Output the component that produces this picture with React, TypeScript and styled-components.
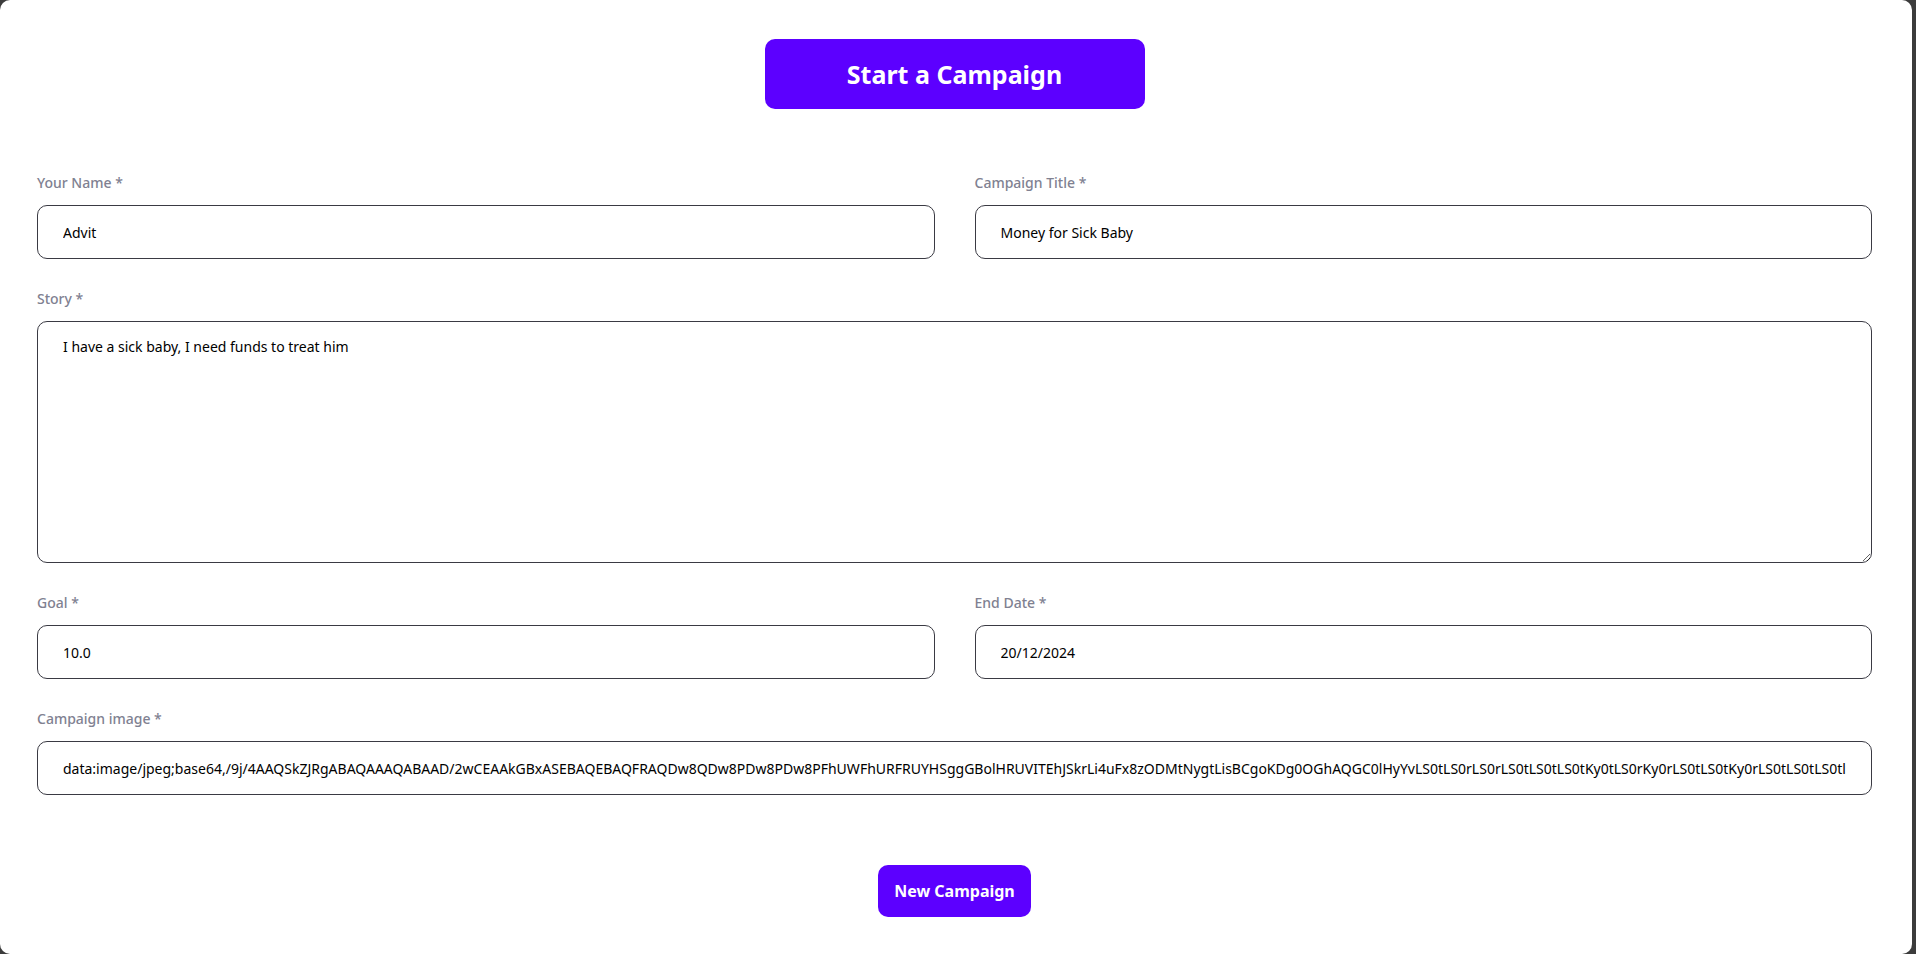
import React, { useState } from "react";
import styled, { createGlobalStyle } from "styled-components";

const GlobalStyle = createGlobalStyle`
    html, body {
        margin: 0;
        padding: 0;
        background: #3c3c3c;
    }
    * {
        box-sizing: border-box;
    }
    body {
        font-family: "Noto Sans", "Open Sans", sans-serif;
    }
`;

const Card = styled.div`
    width: calc(100% - 4px);
    min-height: 100vh;
    background: #ffffff;
    border-radius: 10px;
    padding: 39px 40px 30px 37px;
    display: flex;
    flex-direction: column;
    align-items: center;
`;

const Title = styled.div`
    width: 380px;
    height: 70px;
    border-radius: 10px;
    background: #5c00ff;
    color: #ffffff;
    font-size: 25px;
    font-weight: 700;
    display: flex;
    align-items: center;
    justify-content: center;
`;

const Form = styled.form`
    width: 100%;
    margin-top: 64px;
    display: flex;
    flex-direction: column;
    gap: 30px;
`;

const Row = styled.div`
    display: grid;
    grid-template-columns: 1fr 1fr;
    column-gap: 40px;
`;

const Field = styled.label`
    display: flex;
    flex-direction: column;
`;

const LabelText = styled.span`
    font-size: 14px;
    line-height: 20px;
    font-weight: 500;
    color: #808191;
    margin-bottom: 12px;
`;

const Input = styled.input`
    width: 100%;
    height: 54px;
    padding: 0 25px;
    border: 1px solid #3a3a43;
    border-radius: 10px;
    font-family: "Noto Sans", "Open Sans", sans-serif;
    font-size: 14px;
    color: #000000;
    background: transparent;
    outline: none;
`;

const TextArea = styled.textarea`
    width: 100%;
    height: 242px;
    padding: 15px 25px;
    border: 1px solid #3a3a43;
    border-radius: 10px;
    font-family: "Noto Sans", "Open Sans", sans-serif;
    font-size: 14px;
    line-height: 20px;
    color: #000000;
    background: transparent;
    resize: vertical;
    outline: none;
`;

const Footer = styled.div`
    display: flex;
    justify-content: center;
    margin-top: 40px;
`;

const Submit = styled.button`
    width: 153px;
    height: 52px;
    border: none;
    border-radius: 10px;
    background: #5c00ff;
    color: #ffffff;
    font-family: "Noto Sans", "Open Sans", sans-serif;
    font-size: 16px;
    font-weight: 700;
    cursor: pointer;
`;

const IMAGE_DATA =
    "data:image/jpeg;base64,/9j/4AAQSkZJRgABAQAAAQABAAD/2wCEAAkGBxASEBAQEBAQFRAQDw8QDw8PDw8PDw8PFhUWFhURFRUYHSggGBolHRUVITEhJSkrLi4uFx8zODMtNygtLisBCgoKDg0OGhAQGC0lHyYvLS0tLS0rLS0rLS0tLS0tLS0tKy0tLS0rKy0rLS0tLS0tKy0rLS0tLS0tLS0tlS0tLS0tLS0tLS0tLS0tLS0tLS0tLf/AABEIAKgBLAMBIgACEQEDEQH/xAAbAAACAwEBAQAAAAAAAAAAAAADBAECBQAGB";

const App = () => {
    const [form, setForm] = useState({
        name: "Advit",
        title: "Money for Sick Baby",
        story: "I have a sick baby, I need funds to treat him",
        goal: "10.0",
        deadline: "20/12/2024",
        image: IMAGE_DATA,
    });

    const change = (key: keyof typeof form) =>
        (e: React.ChangeEvent<HTMLInputElement | HTMLTextAreaElement>) =>
            setForm({ ...form, [key]: e.target.value });

    return (
        <>
            <GlobalStyle />
            <Card>
                <Title>Start a Campaign</Title>
                <Form onSubmit={(e) => e.preventDefault()}>
                    <Row>
                        <Field>
                            <LabelText>Your Name *</LabelText>
                            <Input type="text" value={form.name} onChange={change("name")} />
                        </Field>
                        <Field>
                            <LabelText>Campaign Title *</LabelText>
                            <Input type="text" value={form.title} onChange={change("title")} />
                        </Field>
                    </Row>
                    <Field>
                        <LabelText>Story *</LabelText>
                        <TextArea value={form.story} onChange={change("story")} />
                    </Field>
                    <Row>
                        <Field>
                            <LabelText>Goal *</LabelText>
                            <Input type="text" value={form.goal} onChange={change("goal")} />
                        </Field>
                        <Field>
                            <LabelText>End Date *</LabelText>
                            <Input type="text" value={form.deadline} onChange={change("deadline")} />
                        </Field>
                    </Row>
                    <Field>
                        <LabelText>Campaign image *</LabelText>
                        <Input type="text" value={form.image} onChange={change("image")} />
                    </Field>
                    <Footer>
                        <Submit type="submit">New Campaign</Submit>
                    </Footer>
                </Form>
            </Card>
        </>
    );
};

export default App;
